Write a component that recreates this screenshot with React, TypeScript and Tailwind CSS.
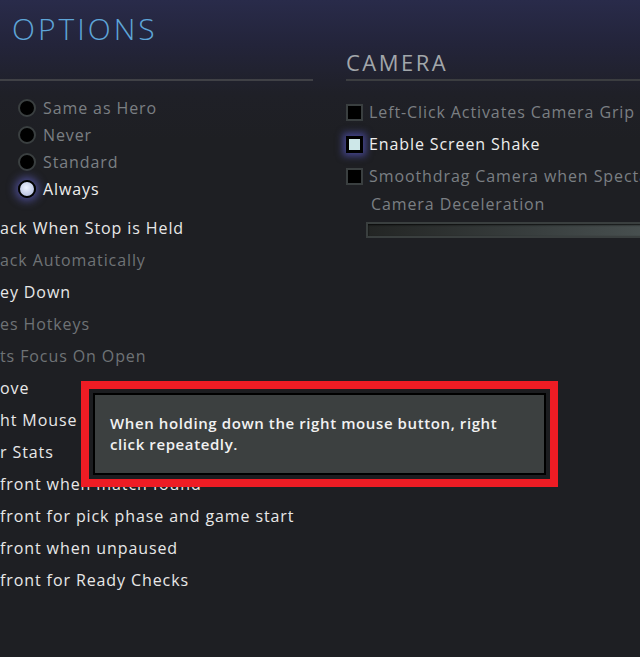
import React from "react";

const font = { fontFamily: '"Open Sans", "Liberation Sans", sans-serif' };

const radios = [
    { label: "Same as Hero", on: false },
    { label: "Never", on: false },
    { label: "Standard", on: false },
    { label: "Always", on: true },
];

const rows = [
    { label: "ack When Stop is Held", dim: false },
    { label: "ack Automatically", dim: true },
    { label: "ey Down", dim: false },
    { label: "es Hotkeys", dim: true },
    { label: "ts Focus On Open", dim: true },
    { label: "ove", dim: false },
    { label: "ht Mouse", dim: false },
    { label: "r Stats", dim: false },
    { label: "front when match found", dim: false },
    { label: "front for pick phase and game start", dim: false },
    { label: "front when unpaused", dim: false },
    { label: "front for Ready Checks", dim: false },
];

const checks = [
    { label: "Left-Click Activates Camera Grip", on: false },
    { label: "Enable Screen Shake", on: true },
    { label: "Smoothdrag Camera when Spectating", on: false },
];

const Radio = ({ on }: { on: boolean }) =>
    on ? (
        <span className="w-[18px] h-[18px] rounded-full border-2 border-black bg-[radial-gradient(circle_at_45%_40%,#eef2ff,#a9b3d6)] shadow-[0_0_8px_3px_rgba(110,110,230,0.55)] shrink-0" />
    ) : (
        <span className="w-[18px] h-[18px] rounded-full border-2 border-[#3a3f40] bg-black shrink-0" />
    );

const Check = ({ on }: { on: boolean }) =>
    on ? (
        <span className="w-[17px] h-[17px] border-[3px] border-black bg-[#cde7e8] shadow-[0_0_7px_3px_rgba(100,100,230,0.55)] shrink-0" />
    ) : (
        <span className="w-[17px] h-[17px] border-2 border-[#3a3f40] bg-black shrink-0" />
    );

export default function App() {
    return (
        <div
            className="relative w-[640px] h-[657px] overflow-hidden bg-[linear-gradient(180deg,#292b4a_0px,#23243a_45px,#1f2027_95px,#1e1f23_140px)] text-[16px] tracking-[0.9px]"
            style={font}
        >
            <div className="flex">
                {/* Colonne gauche */}
                <div className="w-[313px] shrink-0">
                    <div className="h-[81px] border-b-2 border-[#404146] pl-[12px] pt-[11px]">
                        <h1 className="text-[30px] font-light tracking-[3px] text-[#5ea5d8] leading-[36px]">OPTIONS</h1>
                    </div>
                    <div className="pt-[13px] pl-[18px]">
                        {radios.map((r) => (
                            <div key={r.label} className="h-[27px] flex items-center gap-[7px]">
                                <Radio on={r.on} />
                                <span className={r.on ? "text-[#eeeeee]" : "text-[#7b7f83]"}>{r.label}</span>
                            </div>
                        ))}
                    </div>
                    <div className="pt-[10px]">
                        {rows.map((r) => (
                            <div
                                key={r.label}
                                className={`h-[32px] flex items-center whitespace-nowrap ${r.dim ? "text-[#6f7376]" : "text-[#e8e8e8]"}`}
                            >
                                {r.label}
                            </div>
                        ))}
                    </div>
                </div>

                {/* Colonne droite */}
                <div className="ml-[33px] flex-1 min-w-0">
                    <div className="h-[81px] border-b-2 border-[#3b3d40] flex items-end pb-[3px]">
                        <h2 className="text-[22px] tracking-[2.5px] text-[#a2a7ab] leading-[28px]">CAMERA</h2>
                    </div>
                    <div className="pt-[15px]">
                        {checks.map((c) => (
                            <div key={c.label} className="h-[32px] flex items-center gap-[6px] whitespace-nowrap">
                                <Check on={c.on} />
                                <span className={c.on ? "text-[#eeeeee]" : "text-[#7b7f83]"}>{c.label}</span>
                            </div>
                        ))}
                        <div className="pl-[25px] h-[24px] flex items-center text-[#7b7f83] whitespace-nowrap">
                            Camera Deceleration
                        </div>
                        <div className="ml-[20px] -mr-[20px] mt-[6px] h-[16px] border-2 border-[#3a3f3f] bg-[linear-gradient(90deg,#232524,#3a4040_60%,#4a5252)] shadow-[inset_0_1px_2px_rgba(0,0,0,0.8)]" />
                    </div>
                </div>
            </div>

            {/* Tooltip */}
            <div className="absolute left-[81px] top-[381px] w-[477px] h-[106px] border-[8px] border-[#ed1c24] bg-[#1c1d20] p-[4px]">
                <div className="h-full border-2 border-black bg-[#3c4040] pl-[15px] pt-[18px]">
                    <p className="max-w-[395px] text-[15px] font-semibold text-[#f2f2f2] leading-[21px] tracking-[0.6px]">
                        When holding down the right mouse button, right click repeatedly.
                    </p>
                </div>
            </div>
        </div>
    );
}
